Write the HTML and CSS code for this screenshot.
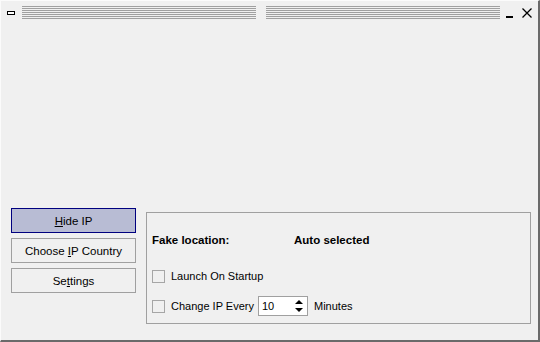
FILE: index.html
```html
<!DOCTYPE html>
<html>
<head>
<meta charset="utf-8">
<link rel="stylesheet" href="styles.css">
</head>
<body>
<div class="window">
  <div class="titlebar">
    <span class="sysicon"></span>
    <span class="grip"></span>
    <span class="grip"></span>
    <span class="tb-min"></span>
    <svg class="tb-close" width="10" height="10" viewBox="0 0 10 10"><path d="M0.5 0.5 L9.5 9.5 M9.5 0.5 L0.5 9.5" stroke="#000" stroke-width="1.3" fill="none"/></svg>
  </div>
  <div class="content">
    <div class="bottom">
      <div class="buttons">
        <div class="btn btn-default"><span><span class="u">H</span>ide IP</span></div>
        <div class="btn"><span>Choose <span class="u">I</span>P Country</span></div>
        <div class="btn"><span>Se<span class="u">t</span>tings</span></div>
      </div>
      <div class="group">
        <div class="loc-row">
          <span class="loc-label">Fake location:</span>
          <span class="loc-value">Auto selected</span>
        </div>
        <div class="check-row first">
          <span class="checkbox"></span>
          <span class="check-label">Launch On Startup</span>
        </div>
        <div class="check-row">
          <span class="checkbox"></span>
          <span class="check-label fixed">Change IP Every</span>
          <span class="spin">
            <span class="spin-val">10</span>
            <svg class="spin-arrows" width="8" height="14" viewBox="0 0 8 14"><path d="M4 1 L8 5 L0 5 Z M0 9 L8 9 L4 13 Z" fill="#000"/></svg>
          </span>
          <span class="minutes">Minutes</span>
        </div>
      </div>
    </div>
  </div>
</div>
</body>
</html>
```
FILE: styles.css
```css
html, body {
  margin: 0;
  padding: 0;
  background: #f0f0f0;
}
.window {
  width: 540px;
  height: 342px;
  box-sizing: border-box;
  border-top: 1px solid #fbfbfb;
  border-left: 1px solid #fbfbfb;
  border-right: 2px solid #6a6a6a;
  border-bottom: 2px solid #6a6a6a;
  background: #f0f0f0;
  display: flex;
  flex-direction: column;
  font-family: "Liberation Sans", Arial, sans-serif;
  font-size: 11px;
  color: #000;
}
.titlebar {
  height: 21px;
  display: flex;
  align-items: flex-start;
  padding-top: 5px;
  box-sizing: border-box;
}
.sysicon {
  width: 6px;
  height: 2px;
  border: 1px solid #000;
  background: #fff;
  margin: 5px 0 0 6px;
}
.grip {
  width: 234px;
  height: 13px;
  background: repeating-linear-gradient(to bottom, #a0a0a0 0, #a0a0a0 1px, transparent 1px, transparent 2px);
  margin-left: 7px;
}
.grip + .grip {
  margin-left: 10px;
}
.tb-min {
  width: 7px;
  height: 2px;
  background: #000;
  margin: 10px 0 0 6px;
}
.tb-close {
  margin: 2px 0 0 9px;
}
.content {
  flex: 1;
  display: flex;
  flex-direction: column;
  justify-content: flex-end;
  padding: 0 0 16px 10px;
}
.bottom {
  display: flex;
  align-items: flex-start;
  gap: 10px;
}
.buttons {
  display: flex;
  flex-direction: column;
  gap: 5px;
}
.btn {
  width: 125px;
  height: 25px;
  box-sizing: border-box;
  border: 1px solid #a0a0a0;
  display: flex;
  align-items: center;
  justify-content: center;
  background: #f0f0f0;
  font-size: 11.5px;
}
.btn-default {
  background: #b8bcd4;
  border-color: #00007f;
}
.u {
  text-decoration: underline;
}
.group {
  width: 385px;
  height: 112px;
  box-sizing: border-box;
  border: 1px solid #a0a0a0;
  margin-top: 4px;
  padding: 20px 0 0 5px;
}
.loc-row {
  display: flex;
  font-weight: bold;
  font-size: 11.5px;
  height: 14px;
  align-items: center;
}
.loc-label {
  width: 142px;
}
.check-row {
  display: flex;
  align-items: center;
  height: 20px;
  margin-top: 10px;
}
.check-row.first {
  margin-top: 19px;
}
.checkbox {
  width: 13px;
  height: 13px;
  box-sizing: border-box;
  border: 1px solid #a6a6a6;
  background: #f0f0f0;
}
.check-label {
  margin-left: 6px;
  font-size: 11px;
}
.check-label.fixed {
  width: 87px;
}
.spin {
  width: 50px;
  height: 20px;
  box-sizing: border-box;
  border: 1px solid #a0a0a0;
  background: #fff;
  display: flex;
  align-items: center;
  justify-content: space-between;
  padding: 0 4px 0 3px;
  font-size: 11px;
}
.spin-arrows {
  display: block;
}
.minutes {
  margin-left: 6px;
  font-size: 11px;
}
```
